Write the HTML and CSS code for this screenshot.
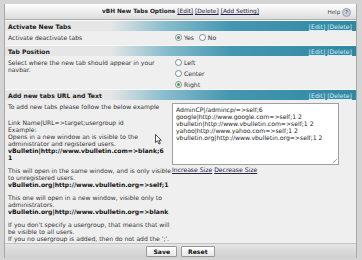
FILE: index.html
```html
<!DOCTYPE html>
<html lang="en">
<head>
    <meta charset="UTF-8">
    <title>vBH New Tabs Options</title>
    <link rel="stylesheet" href="styles.css">
</head>
<body>
    <div class="panel">
        <div class="panel-head">
            <span class="title">vBH New Tabs Options <a href="#">[Edit]</a> <a href="#">[Delete]</a> <a href="#">[Add Setting]</a></span>
            <span class="help">Help <i>?</i></span>
        </div>

        <div class="sec-head">
            <b>Activate New Tabs</b>
            <span class="tools"><a href="#">[Edit]</a> <a href="#">[Delete]</a></span>
        </div>
        <div class="row row-short">
            <div class="desc">Activate deactivate tabs</div>
            <div class="ctrl inline">
                <label><span class="radio on"></span> Yes</label>
                <label><span class="radio"></span> No</label>
            </div>
        </div>

        <div class="sec-head">
            <b>Tab Position</b>
            <span class="tools"><a href="#">[Edit]</a> <a href="#">[Delete]</a></span>
        </div>
        <div class="row row-pos">
            <div class="desc">Select where the new tab should appear in your navbar.</div>
            <div class="ctrl stack">
                <label><span class="radio"></span> Left</label>
                <label><span class="radio"></span> Center</label>
                <label><span class="radio on"></span> Right</label>
            </div>
        </div>

        <div class="sec-head">
            <b>Add new tabs URL and Text</b>
            <span class="tools"><a href="#">[Edit]</a> <a href="#">[Delete]</a></span>
        </div>
        <div class="row row-big">
            <div class="desc">
                <p>To add new tabs please follow the below example</p>
                <p>Link Name|URL=&gt;target;usergroup id<br>Example:<br>Opens in a new window an is visible to the administrator and registered users.<br><b>vBulletin|http://www.vbulletin.com=&gt;blank;6<br>1</b></p>
                <p>This will open in the same window, and is only visible to unregistered users.<br><b>vBulletin.org|http://www.vbulletin.org=&gt;self;1</b></p>
                <p>This one will open in a new window, visible only to administrators.<br><b>vBulletin.org|http://www.vbulletin.org=&gt;blank</b></p>
                <p>If you don't specify a usergroup, that means that will be visible to all users.<br>If you no usergroup is added, then do not add the ';'.</p>
            </div>
            <div class="ctrl">
                <div class="textbox">AdminCP|/admincp/=&gt;self;6
google|http://www.google.com=&gt;self;1 2
vbulletin|http://www.vbulletin.com=&gt;self;1 2
yahoo|http://www.yahoo.com=&gt;self;1 2
vbulletin.org|http://www.vbulletin.org=&gt;self;1 2<span class="grip"></span></div>
                <div class="size-links"><a href="#">Increase Size</a> <a href="#">Decrease Size</a></div>
            </div>
            <!-- mouse pointer seen in the screenshot -->
            <svg class="pointer" width="7" height="11" viewBox="0 0 7 11">
                <path d="M0.5 0.5 L0.5 8.5 L2.5 6.8 L4 10 L5.3 9.4 L3.9 6.3 L6.3 6.3 Z" fill="#ffffff" stroke="#222222" stroke-width="0.8"/>
            </svg>
        </div>

        <div class="foot">
            <button type="button">Save</button>
            <button type="button">Reset</button>
        </div>
    </div>
</body>
</html>
```

FILE: styles.css
```css
body {
    margin: 0;
    padding: 4px 5px 3px 4px;
    background-color: #d4d4d4;
    font-family: "DejaVu Sans", Verdana, sans-serif;
    font-size: 6.1px;
    line-height: 7px;
    color: #333333;
}
a {
    color: #222244;
}
.panel {
    border-left: 1px solid #a8a8a8;
    border-right: 1px solid #a8a8a8;
    background-color: #efefef;
}
.panel-head {
    height: 15px;
    display: flex;
    align-items: center;
    justify-content: center;
    position: relative;
    background: linear-gradient(#ffffff, #dcdcdc);
    border-bottom: 1px solid #b0b0b0;
}
.panel-head .title {
    font-weight: bold;
    font-size: 5.8px;
    color: #222222;
}
.panel-head .title a {
    font-weight: normal;
}
.help {
    position: absolute;
    right: 5px;
    top: 4px;
    font-size: 5.6px;
    color: #444444;
}
.help i {
    display: inline-block;
    width: 7px;
    height: 7px;
    border-radius: 50%;
    background: #c8ccd6;
    border: 1px solid #9aa0ad;
    font-style: normal;
    font-size: 5px;
    line-height: 7px;
    text-align: center;
    color: #334;
}
.sec-head {
    height: 10px;
    display: flex;
    align-items: center;
    justify-content: space-between;
    padding: 0 4px 0 3px;
    background: linear-gradient(to right, #e6e6e6 0%, #e6e6e6 30%, #86bccd 46%, #4597b0 64%, #2f88a3 100%);
    border-top: 1px solid #f8f8f8;
}
.sec-head b {
    color: #1a1a1a;
}
.tools a {
    color: #d8ecf4;
}
.row {
    display: flex;
    padding: 3px 3px 0 3px;
    position: relative;
}
.row-short {
    height: 11px;
}
.row-pos {
    height: 30px;
}
.row-big {
    height: 140px;
}
.desc {
    width: 164px;
}
.desc p {
    margin: 0 0 6px 0;
}
.desc p:first-child {
    margin-bottom: 9px;
}
.desc b {
    color: #111111;
}
.ctrl {
    flex: 1;
}
.inline {
    display: flex;
    align-items: flex-start;
    gap: 5px;
    padding-left: 3px;
}
.inline label {
    display: flex;
    align-items: center;
    gap: 2px;
}
.stack {
    display: flex;
    flex-direction: column;
    gap: 4px;
    padding-left: 3px;
}
.stack label {
    display: flex;
    align-items: center;
    gap: 2px;
}
.radio {
    display: inline-block;
    width: 5px;
    height: 5px;
    border-radius: 50%;
    border: 1px solid #7a8a9a;
    background: #ffffff;
    position: relative;
}
.radio.on::after {
    content: "";
    position: absolute;
    left: 1px;
    top: 1px;
    width: 3px;
    height: 3px;
    border-radius: 50%;
    background: #3aa040;
}
.textbox {
    width: 159px;
    height: 56px;
    border: 1px solid #a0a0a0;
    background: #ffffff;
    padding: 2px 3px;
    white-space: pre;
    overflow: hidden;
    color: #222222;
    position: relative;
}
.grip {
    position: absolute;
    right: 1px;
    bottom: 1px;
    width: 4px;
    height: 4px;
    background: linear-gradient(135deg, transparent 45%, #b0b0b0 45%, #b0b0b0 60%, transparent 60%);
}
.size-links {
    margin-top: 1px;
}
.pointer {
    position: absolute;
    left: 150px;
    top: 34px;
}
.foot {
    height: 14px;
    display: flex;
    align-items: center;
    justify-content: center;
    gap: 4px;
    background: linear-gradient(#e4e4e4, #d0d0d0);
    border-top: 1px solid #c4c4c4;
}
.foot button {
    font-family: inherit;
    font-size: 6.1px;
    font-weight: bold;
    line-height: 7px;
    padding: 1px 6px;
    background: linear-gradient(#ffffff, #e8e8e8);
    border: 1px solid #999999;
    border-radius: 1px;
    color: #111111;
}
```
